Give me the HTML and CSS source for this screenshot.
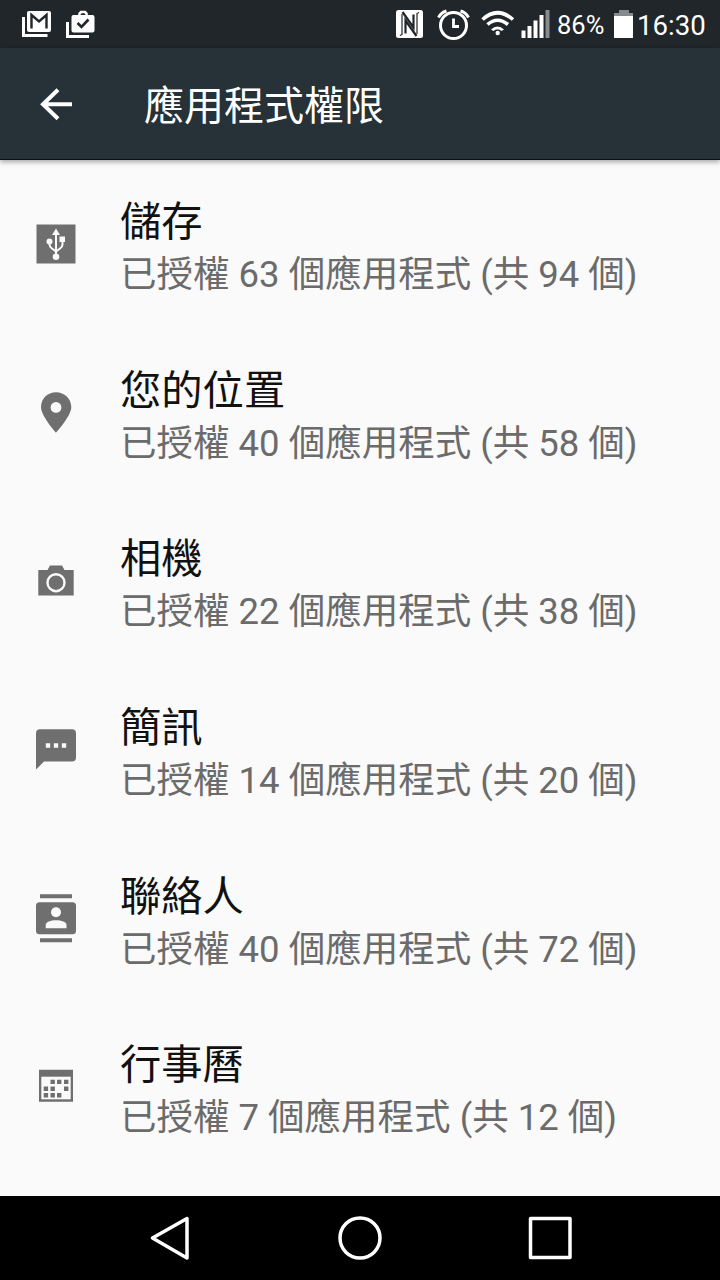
FILE: index.html
```html
<!DOCTYPE html>
<html lang="zh-Hant">
<head>
<meta charset="utf-8">
<title>應用程式權限</title>
<link rel="stylesheet" href="styles.css">
</head>
<body>
<div class="screen">
  <header class="status">
    <svg class="notif" width="30" height="28" viewBox="21 10 30 28">
      <path d="M23.500 17v18.500H47.500" fill="none" stroke="#fff" stroke-width="3"/>
      <rect x="27" y="11" width="24" height="21" rx="2" fill="#fff"/>
      <path d="M31.500 28.500V15l7.500 6.500L46.500 15v13.500" fill="none" stroke="#20262a" stroke-width="2.400"/>
    </svg>
    <svg class="notif" width="30" height="28" viewBox="65 10 30 28">
      <path d="M67.500 22v14.500H89" fill="none" stroke="#fff" stroke-width="3"/>
      <path d="M79.500 16v-2.500l1.500-1.500h4l1.500 1.500V16" fill="none" stroke="#fff" stroke-width="2.500"/>
      <rect x="71.500" y="15" width="23" height="17.500" rx="2" fill="#fff"/>
      <path d="M77.500 23l4 4 7-7.500" fill="none" stroke="#20262a" stroke-width="2.600"/>
    </svg>
    <span class="spacer"></span>
    <svg width="160" height="48" viewBox="395 0 160 48">
      <rect x="396" y="10" width="27" height="28" rx="2.500" fill="#fff"/>
      <path d="M402.500 12L413.500 27.500V14.500M416.500 36L405.500 20.500V33.500" fill="none" stroke="#20262a" stroke-width="2.200"/>
      <path d="M402 14v20.500l-2 1M417 34V13.500l2-1" fill="none" stroke="#20262a" stroke-width="1.200"/>
      <circle cx="453.500" cy="25.500" r="13" fill="none" stroke="#fff" stroke-width="3"/>
      <path d="M453.500 18.500v8h5.500" fill="none" stroke="#fff" stroke-width="2.800"/>
      <path d="M438.500 17.500q2.500-5 8-6.500M468.500 17.500q-2.500-5-8-6.500" fill="none" stroke="#fff" stroke-width="3"/>
      <path d="M482.500 19.500q15-13.500 30.500 0M487.500 24.500q10-8.500 20.500 0" fill="none" stroke="#fff" stroke-width="3.600"/>
      <path d="M491 29.500q6.500-6 13 0l-2.500 1.500-2.500-1.500h-3l-2.500 1.500z" fill="#fff"/>
      <circle cx="497.700" cy="33" r="2.200" fill="#fff"/>
      <path d="M521.500 30.500h4V38h-4zM527.500 26h4v12h-4zM533.500 20.500h4V38h-4zM539.500 15h4v23h-4z" fill="#fff"/>
      <path d="M545.500 10h4v28h-4z" fill="#888b8d"/>
    </svg>
    <span class="percent">86%</span>
    <svg class="battery" width="20" height="28" viewBox="0 0 20 28">
      <path d="M5 0h10v3h4v3H0V3h5z" fill="#888b8d"/><path d="M0 6h19v22H0z" fill="#fff"/>
    </svg>
    <span class="clock">16:30</span>
  </header>
  <div class="appbar">
    <svg width="48" height="48" viewBox="0 0 48 48"><path d="M26 9.500L11 24l15 14.500M10.500 24H40" transform="translate(0 .2)" fill="none" stroke="#fff" stroke-width="4"/></svg>
    <h1>應用程式權限</h1>
  </div>
  <main class="list">
    <section class="row">
      <svg class="icon" viewBox="0 0 48 48"><path d="M4.500 4.500h39v39h-39z"/><path d="M24 12v25M17.500 22v2.500q0 2.500 2.500 4l4 3 4-3q2.500-1.500 2.500-4V20" fill="none" stroke="#fafafa" stroke-width="2"/><path d="M24 8.500l4 6.500h-8zM27.500 16.500h5.500V22h-5.500z" fill="#fafafa"/><circle cx="17.500" cy="21.500" r="3" fill="#fafafa"/><circle cx="24" cy="36.700" r="3.300" fill="#fafafa"/></svg>
      <div class="text"><h2>儲存</h2><p>已授權 63 個應用程式 (共 94 個)</p></div>
    </section>
    <section class="row">
      <svg class="icon" viewBox="0 0 48 48"><path fill-rule="evenodd" d="M24 3.300C15.500 3.300 9 9.900 9 18.300 9 27 24 43.700 24 43.700S39.300 27 39.300 18.300C39.300 9.900 32.500 3.300 24 3.300zM24 13a5.400 5.400 0 1 1 0 10.800A5.400 5.400 0 0 1 24 13z"/></svg>
      <div class="text"><h2>您的位置</h2><p>已授權 40 個應用程式 (共 58 個)</p></div>
    </section>
    <section class="row">
      <svg class="icon" viewBox="0 0 48 48"><path d="M6.300 13h9.200l2.500-4.500h12l2.500 4.500h9.200v25.500H6.300z"/><circle cx="24" cy="25.700" r="8.500" fill="none" stroke="#fafafa" stroke-width="2.400"/></svg>
      <div class="text"><h2>相機</h2><p>已授權 22 個應用程式 (共 38 個)</p></div>
    </section>
    <section class="row">
      <svg class="icon" viewBox="0 0 48 48"><path d="M8 3.300h32q4 0 4 4V31.500q0 4-4 4H12l-8 8V7.300q0-4 4-4z"/><path d="M13.800 17.300h4.400v4.400h-4.400zM21.800 17.300h4.400v4.400h-4.400zM29.800 17.300h4.400v4.400h-4.400z" fill="#fafafa"/></svg>
      <div class="text"><h2>簡訊</h2><p>已授權 14 個應用程式 (共 20 個)</p></div>
    </section>
    <section class="row">
      <svg class="icon" viewBox="0 0 48 48"><path d="M8-.7h32v4H8zM8 43.300h32v4H8z"/><rect x="4" y="7.300" width="40" height="32" rx="3.500"/><circle cx="24" cy="17.300" r="5" fill="#fafafa"/><path d="M13.700 33.300V30c0-6.300 20.800-6.300 20.800 0v3.300z" fill="#fafafa"/></svg>
      <div class="text"><h2>聯絡人</h2><p>已授權 40 個應用程式 (共 72 個)</p></div>
    </section>
    <section class="row">
      <svg class="icon" viewBox="0 0 48 48"><path d="M7 6.700h34v32H7z"/><path d="M9.300 13.700h29.400v22.600H9.300z" fill="#fafafa"/><path d="M18.500 16.700h4.400V21h-4.400zM25 16.700h4.400V21H25zM32 16.700h4.400V21H32zM11.700 23.500h4.400v4.400h-4.400zM18.500 23.500h4.400v4.400h-4.400zM32 23.500h4.400v4.400H32zM11.700 30h4.400v4.400h-4.400zM18.500 30h4.400v4.400h-4.400zM25 30h4.400v4.400H25z"/></svg>
      <div class="text"><h2>行事曆</h2><p>已授權 7 個應用程式 (共 12 個)</p></div>
    </section>
  </main>
  <nav class="nav">
    <svg width="720" height="84" viewBox="0 0 720 84" fill="none" stroke="#fff" stroke-width="3.500" stroke-linejoin="round">
      <path d="M187 22.500v39.500L152.500 42z"/><circle cx="360" cy="42" r="20"/><path d="M530.500 22.500h39.500v39h-39.500z"/>
    </svg>
  </nav>
</div>
</body>
</html>
```
FILE: styles.css
```css
body { margin: 0; background: #fafafa; font-family: Roboto, "Noto Sans CJK TC", sans-serif; }
.screen { width: 720px; height: 1280px; display: flex; flex-direction: column; overflow: hidden; }
.status { height: 48px; flex: none; box-sizing: border-box; display: flex; align-items: center; background: #20262a; color: #fff; padding: 0 14px 0 21px; white-space: nowrap; }
.notif { margin-right: 14px; }
.spacer { flex: 1; }
.percent { font-size: 25.5px; width: 48px; margin: 2px 9px 0 2px; }
.battery { margin-right: 3px; }
.clock { font-size: 27.6px; width: 69px; margin-top: 2px; }
.appbar { height: 112px; flex: none; box-sizing: border-box; display: flex; align-items: center; padding-left: 32px; gap: 64px; background: #263238; color: #fff; border-bottom: 1px solid #0a1218; box-shadow: 0 2px 5px rgba(0, 0, 0, .35); z-index: 1; }
h1, h2, p { margin: 0; font-weight: 400; white-space: nowrap; }
h1 { font-size: 40px; line-height: 56px; padding-top: 6px; }
.list { flex: 1; min-height: 0; overflow: hidden; }
.row { height: 168.6px; display: flex; align-items: center; padding-left: 32px; gap: 40px; }
.icon { width: 48px; height: 48px; flex: none; fill: #6f6f6f; overflow: visible; }
.text { padding-top: 7px; }
h2 { font-size: 41.3px; line-height: 54px; color: #111; }
p { font-size: 36.5px; line-height: 51px; color: #6b6b6b; }
.nav { height: 84px; flex: none; background: #000; }
.nav svg { display: block; }
```
